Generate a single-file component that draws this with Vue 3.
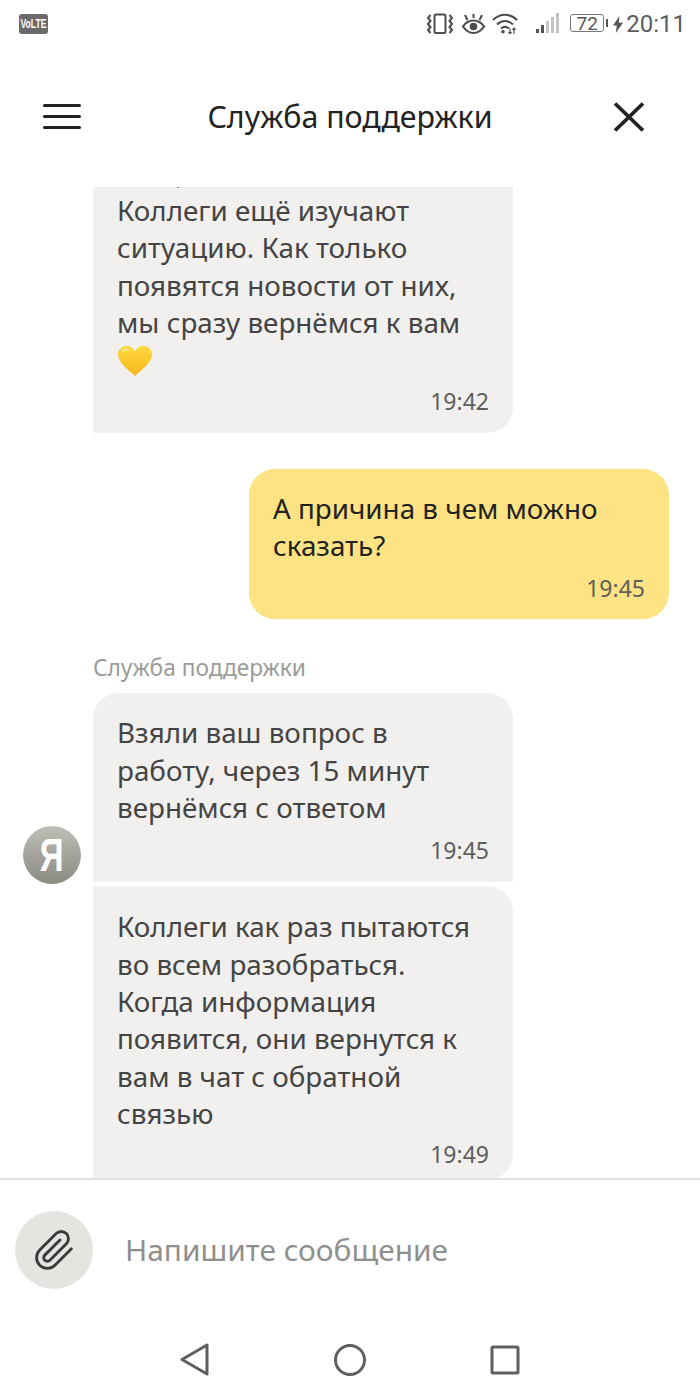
<script setup>
const firstLines = ['Коллеги ещё изучают', 'ситуацию. Как только', 'появятся новости от них,', 'мы сразу вернёмся к вам']
const thirdLines = ['Взяли ваш вопрос в', 'работу, через 15 минут', 'вернёмся с ответом']
const fourthLines = ['Коллеги как раз пытаются', 'во всем разобраться.', 'Когда информация', 'появится, они вернутся к', 'вам в чат с обратной', 'связью']
</script>

<template>
  <div class="screen">
    <div class="status">
      <span class="volte"><span class="volte-text">VoLTE</span></span>
      <div class="status-right">
        <svg class="ic-vib" width="28" height="22" viewBox="0 0 28 22" fill="none" stroke="#4c4c4c" stroke-width="2">
          <rect x="8.5" y="1.500" width="11" height="18.500" rx="1.500" />
          <path d="M4.500 2 2 5l2.500 3L2 11l2.500 3L2 17l2.500 3M23.500 2 26 5l-2.500 3 2.500 3-2.500 3 2.500 3-2.500 3" />
        </svg>
        <svg class="ic-eye" width="25" height="22" viewBox="0 0 25 22" fill="none" stroke="#4c4c4c" stroke-width="2.200">
          <path d="M2 13.500c3-4.500 6.500-6 10.500-6S20 9 23 13.500c-3 4.500-6.500 6.500-10.500 6.500S5 18 2 13.500z" />
          <circle cx="12.500" cy="13.500" r="3.800" fill="#4c4c4c" stroke="none" />
          <path d="M4 2l2.500 5M21 2l-2.500 5M12.500 1v4" stroke-width="2" />
        </svg>
        <svg class="ic-wifi" width="26" height="21" viewBox="0 0 26 21" fill="none" stroke="#4c4c4c" stroke-width="2.200">
          <path d="M1 7c7-7 17-7 24 0M5 11.500c5-4.500 11-4.500 16 0M9 15.500c2.500-2 5.500-2 8 0" />
          <circle cx="11" cy="18.800" r="1.800" fill="#4c4c4c" stroke="none" />
          <path d="M18 15.500v5.500M22 15.500v5.500M16.500 19l1.500 2 1.500-2M20.500 17l1.500-2 1.500 2" stroke-width="1.200" />
        </svg>
        <svg class="ic-signal" width="24" height="21" viewBox="0 0 24 21">
          <rect x="0" y="16" width="3" height="4" fill="#555" />
          <rect x="5" y="12" width="3" height="8" fill="#555" />
          <rect x="10" y="8" width="3" height="12" fill="#c4c4c4" />
          <rect x="15" y="4" width="3" height="16" fill="#c4c4c4" />
          <rect x="20" y="0" width="3" height="20" fill="#c4c4c4" />
        </svg>
        <span class="battery"><span class="battery-num">72</span></span>
        <span class="nub"></span>
        <svg class="ic-bolt" width="10" height="17" viewBox="0 0 10 17">
          <path d="M6.500 0 0 9.500h3.800L2.800 17 10 6.800H5.800z" fill="#555" />
        </svg>
        <span class="clock">20:11</span>
      </div>
    </div>

    <header class="header">
      <div class="burger"><i></i><i></i><i></i></div>
      <div class="title">Служба поддержки</div>
      <svg class="close" width="32" height="30" viewBox="0 0 32 30" fill="none" stroke="#222" stroke-width="3.800">
        <path d="M2 1.500l28 27M30 1.500l-28 27" />
      </svg>
    </header>

    <main class="chat">
      <div class="bubble in first">
        <span class="speck"></span>
        <div v-for="l in firstLines" :key="l" class="line">{{ l }}</div>
        <div class="line">
          <svg class="heart" width="36" height="32" viewBox="0 0 36 32">
            <defs>
              <linearGradient id="hg" x1="0" y1="0" x2="0" y2="1">
                <stop offset="0" stop-color="#ffd83f" />
                <stop offset="1" stop-color="#f6b81c" />
              </linearGradient>
            </defs>
            <path d="M18 31C10 24 1 17 1 9.500 1 4.500 5 1 9.500 1 13 1 16.500 3 18 6.500 19.500 3 23 1 26.500 1 31 1 35 4.500 35 9.500 35 17 26 24 18 31z" fill="url(#hg)" />
            <path d="M6 6c1.500-1.500 3.500-1.800 5-1" stroke="#ffeb8a" stroke-width="2" fill="none" stroke-linecap="round" />
          </svg>
        </div>
        <div class="time">19:42</div>
      </div>

      <div class="bubble out">
        <div class="line">А причина в чем можно</div>
        <div class="line">сказать?</div>
        <div class="time">19:45</div>
      </div>

      <div class="sender">Служба поддержки</div>

      <div class="row">
        <div class="avatar"><span class="avatar-letter">Я</span></div>
        <div class="bubble in third">
          <div v-for="l in thirdLines" :key="l" class="line">{{ l }}</div>
          <div class="time">19:45</div>
        </div>
      </div>

      <div class="bubble in fourth">
        <div v-for="l in fourthLines" :key="l" class="line">{{ l }}</div>
        <div class="time">19:49</div>
      </div>
    </main>

    <div class="composer">
      <div class="attach">
        <svg width="43" height="43" viewBox="0 0 24 24" fill="none" stroke="#3a3a3a" stroke-width="1.600" stroke-linecap="round" stroke-linejoin="round">
          <path d="M21.440 11.050l-9.190 9.190a6 6 0 0 1-8.490-8.490l9.190-9.190a4 4 0 0 1 5.660 5.660l-9.200 9.190a2 2 0 0 1-2.830-2.830l8.490-8.480" />
        </svg>
      </div>
      <div class="placeholder">Напишите сообщение</div>
    </div>

    <nav class="navbar">
      <svg width="30" height="34" viewBox="0 0 30 34" fill="none" stroke="#5f5f5f" stroke-width="3" stroke-linejoin="round">
        <path d="M27 2v29L2 16.500z" />
      </svg>
      <svg width="34" height="34" viewBox="0 0 34 34" fill="none" stroke="#5f5f5f" stroke-width="3">
        <circle cx="17" cy="17" r="14.500" />
      </svg>
      <svg class="nav-square" width="30" height="30" viewBox="0 0 30 30" fill="none" stroke="#5f5f5f" stroke-width="3" stroke-linejoin="round">
        <rect x="2" y="2" width="26" height="26" rx="1" />
      </svg>
    </nav>
  </div>
</template>

<style>
html, body { margin: 0; background: #fff; }
</style>

<style scoped>
.screen {
  width: 700px;
  height: 1400px;
  display: flex;
  flex-direction: column;
  overflow: hidden;
  background: #fff;
  font-family: "Noto Sans", "Open Sans", sans-serif;
  color: #444;
}
.status {
  height: 46px;
  flex: none;
  display: flex;
  justify-content: space-between;
  align-items: flex-start;
  padding: 13px 14px 0 19px;
  box-sizing: border-box;
}
.volte {
  width: 29px;
  height: 20px;
  margin-top: 1px;
  border-radius: 3px;
  background: #6a6a6a;
  color: #fff;
  font: bold 12px/20px "Liberation Sans", sans-serif;
  text-align: center;
  overflow: hidden;
}
.volte-text { display: inline-block; margin-left: -6px; width: 41px; transform: scaleX(0.72); white-space: nowrap; }
.status-right { display: flex; align-items: flex-start; }
.ic-vib { margin-top: 0; }
.ic-eye { margin-left: 7px; }
.ic-wifi { margin-left: 6px; }
.ic-signal { margin-left: 18px; }
.battery {
  width: 34px;
  height: 18px;
  margin: 1px 0 0 10px;
  border: 1.5px solid #777;
  border-radius: 3px;
  box-sizing: border-box;
  display: flex;
  align-items: center;
  justify-content: center;
}
.battery-num { font: 19px/15px Roboto, sans-serif; color: #555; }
.nub { width: 2px; height: 8px; margin: 6px 0 0 2px; background: #555; }
.ic-bolt { margin: 3px 0 0 5px; }
.clock { margin: -4px 0 0 3px; font: 24px/30px Roboto, sans-serif; color: #5c5c5c; }

.header {
  height: 141px;
  flex: none;
  display: flex;
  align-items: center;
  justify-content: space-between;
  padding: 0 55px 0 43px;
  box-sizing: border-box;
}
.burger { width: 38px; display: flex; flex-direction: column; gap: 7.500px; }
.burger i { display: block; height: 3.500px; border-radius: 2px; background: #222; }
.title { margin-left: 6px; font-size: 30.400px; line-height: 40px; color: #222; }

.chat { flex: 1; min-height: 0; overflow: hidden; margin-bottom: -1px; }
.bubble {
  box-sizing: border-box;
  width: 420px;
  padding: 21px 24px 16px;
  border-radius: 26px;
  background: #f1f0ee;
}
.line { font-size: 27.800px; line-height: 37.400px; white-space: nowrap; }
.time { margin-top: 9px; font-size: 23px; line-height: 30px; text-align: right; color: #5e5e5e; }
.in { margin-left: 93px; }
.first {
  position: relative;
  padding-top: 5px;
  padding-bottom: 17px;
  border-radius: 0 0 26px 0;
}
.speck {
  position: absolute;
  left: 84px;
  top: 0;
  width: 2px;
  height: 1px;
  background: #777;
}
.heart { display: block; margin-top: 3px; }
.out {
  margin: 36px 0 0 249px;
  background: #fde383;
  color: #222;
}
.sender {
  margin: 24px 0 0 93px;
  font-size: 22.700px;
  line-height: 50px;
  color: #9b9b99;
}
.row { display: flex; align-items: flex-end; padding-left: 23px; gap: 12px; }
.row .in { margin-left: 0; }
.third { padding-bottom: 17.500px; border-radius: 26px 26px 0 0; }
.third .time { margin-top: 8px; }
.avatar {
  width: 58px;
  height: 58px;
  margin-bottom: -2px;
  flex: none;
  border-radius: 50%;
  background: linear-gradient(#c0bfb7, #8b8a82);
  color: #fff;
  font: bold 46px/58px "Liberation Sans", sans-serif;
  text-align: center;
}
.avatar-letter { display: inline-block; transform: scaleX(0.72); }
.fourth { margin-top: 4px; padding: 22px 24px 11px; border-radius: 0 26px 26px 0; }
.fourth .time { margin-top: 6px; }

.composer {
  height: 143px;
  flex: none;
  display: flex;
  align-items: flex-start;
  padding: 31px 0 0 15px;
  box-sizing: border-box;
  border-top: 2px solid #e0e0de;
}
.attach {
  width: 78px;
  height: 78px;
  flex: none;
  border-radius: 50%;
  background: #e5e4e1;
  display: flex;
  align-items: center;
  justify-content: center;
}
.placeholder {
  margin-left: 32px;
  font-size: 29.900px;
  line-height: 78px;
  color: #8f8f8d;
}
.navbar {
  height: 79px;
  flex: none;
  box-sizing: border-box;
  display: flex;
  align-items: flex-start;
  justify-content: space-between;
  padding: 22px 180px 0 180px;
}
.nav-square { margin-top: 2px; }
</style>
